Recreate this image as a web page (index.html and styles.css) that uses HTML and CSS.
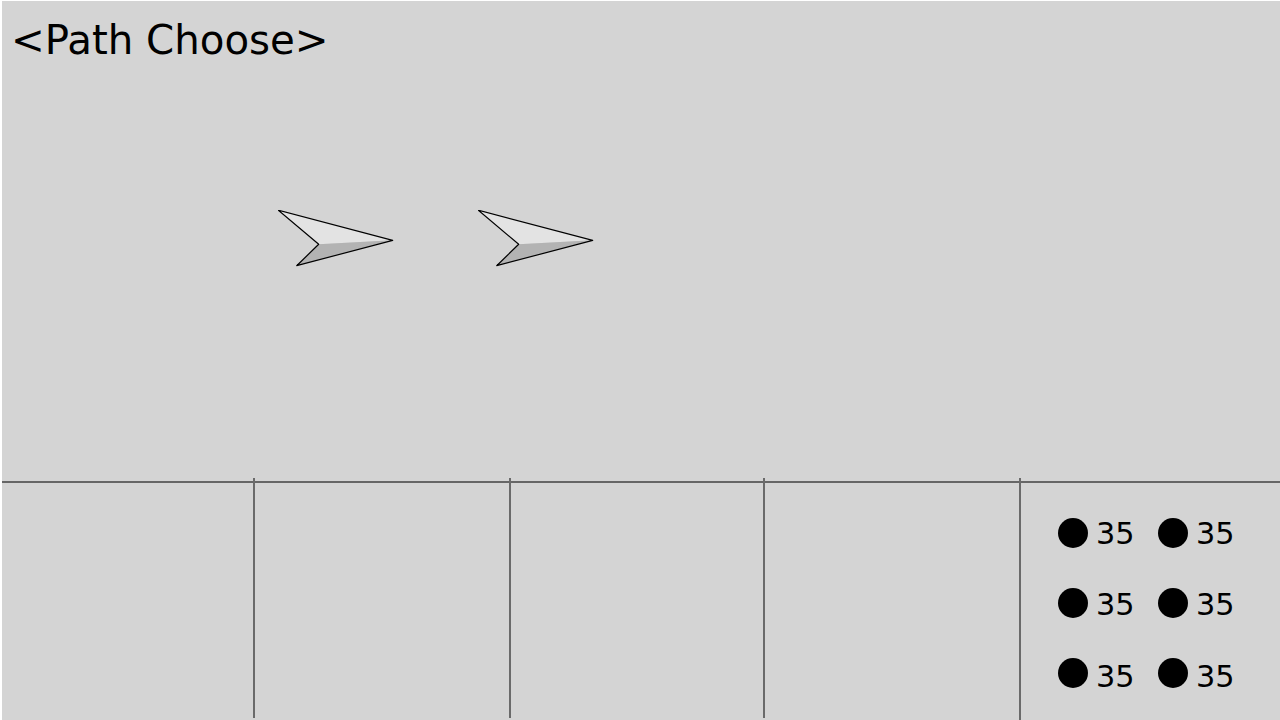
FILE: index.html
```html
<!DOCTYPE html>
<html>
  <head>
    <title>Path Choose</title>
    <meta charset="UTF-8">
    <link rel="stylesheet" href="styles.css">
  </head>
  <body>
    <main class="screen">
      <section class="stage">
        <h1 class="title">&lt;Path Choose&gt;</h1>
        <div class="ships">
          <svg class="ship" viewBox="0 0 116 58" width="116" height="58">
            <polygon class="ship-light" points="0.3,0.2 114.7,30.3 40.7,34.3"/>
            <polygon class="ship-dark" points="18.7,55.7 114.7,30.3 40.7,34.3"/>
            <polygon class="ship-line" points="0.3,0.2 114.7,30.3 18.7,55.7 40.7,34.3"/>
          </svg>
          <svg class="ship" viewBox="0 0 116 58" width="116" height="58">
            <polygon class="ship-light" points="0.3,0.2 114.7,30.3 40.7,34.3"/>
            <polygon class="ship-dark" points="18.7,55.7 114.7,30.3 40.7,34.3"/>
            <polygon class="ship-line" points="0.3,0.2 114.7,30.3 18.7,55.7 40.7,34.3"/>
          </svg>
        </div>
      </section>
      <section class="panel">
        <div class="slot slot-first"></div>
        <div class="slot slot-a"></div>
        <div class="slot slot-b"></div>
        <div class="slot slot-c"></div>
        <div class="slot slot-stats">
          <div class="stats">
            <div class="stat"><span class="dot"></span><span class="num">35</span></div>
            <div class="stat"><span class="dot"></span><span class="num">35</span></div>
            <div class="stat"><span class="dot"></span><span class="num num-mid">35</span></div>
            <div class="stat"><span class="dot"></span><span class="num num-mid">35</span></div>
            <div class="stat"><span class="dot"></span><span class="num num-low">35</span></div>
            <div class="stat"><span class="dot"></span><span class="num num-low">35</span></div>
          </div>
        </div>
      </section>
    </main>
  </body>
</html>
```

FILE: styles.css
```css
* {
  box-sizing: border-box;
  margin: 0;
  padding: 0;
}

html,
body {
  height: 720px;
  overflow: hidden;
  background-color: #fff;
}

body {
  font-family: "DejaVu Sans", sans-serif;
  color: #000;
  padding: 1px 0 0 2px;
}

.screen {
  height: 719px;
  background-color: #d4d4d4;
  display: flex;
  flex-direction: column;
}

.stage {
  height: 480px;
  flex: none;
  padding: 15px 0 0 9px;
}

.title {
  font-size: 40.3px;
  font-weight: normal;
  line-height: 50px;
}

.ships {
  display: flex;
  gap: 84px;
  margin: 144px 0 0 267px;
}

.ship {
  display: block;
}

.ship-light {
  fill: #e3e3e3;
}

.ship-dark {
  fill: #b3b3b3;
}

.ship-line {
  fill: none;
  stroke: #000;
  stroke-width: 1.2;
  stroke-linejoin: round;
}

.panel {
  flex: 1;
  display: flex;
  border-top: 2px solid #666;
}

.slot {
  margin-top: -5px;
  height: 240px;
  border-left: 2px solid #6a6a6a;
}

.slot-first {
  width: 251px;
  border-left: none;
}

.slot-a {
  width: 256px;
}

.slot-b {
  width: 254px;
}

.slot-c {
  width: 256px;
}

.slot-stats {
  flex: 1;
  height: 243px;
  padding: 40px 0 0 37px;
}

.stats {
  display: grid;
  grid-template-columns: repeat(2, 100px);
  grid-auto-rows: 70px;
}

.stat {
  display: flex;
  align-items: flex-start;
  gap: 8px;
}

.dot {
  width: 30px;
  height: 30px;
  border-radius: 50%;
  background-color: #000;
}

.num {
  font-size: 30.3px;
  line-height: 30px;
  margin-top: 1px;
}

.num-mid {
  margin-top: 2px;
}

.num-low {
  margin-top: 4px;
}
```
